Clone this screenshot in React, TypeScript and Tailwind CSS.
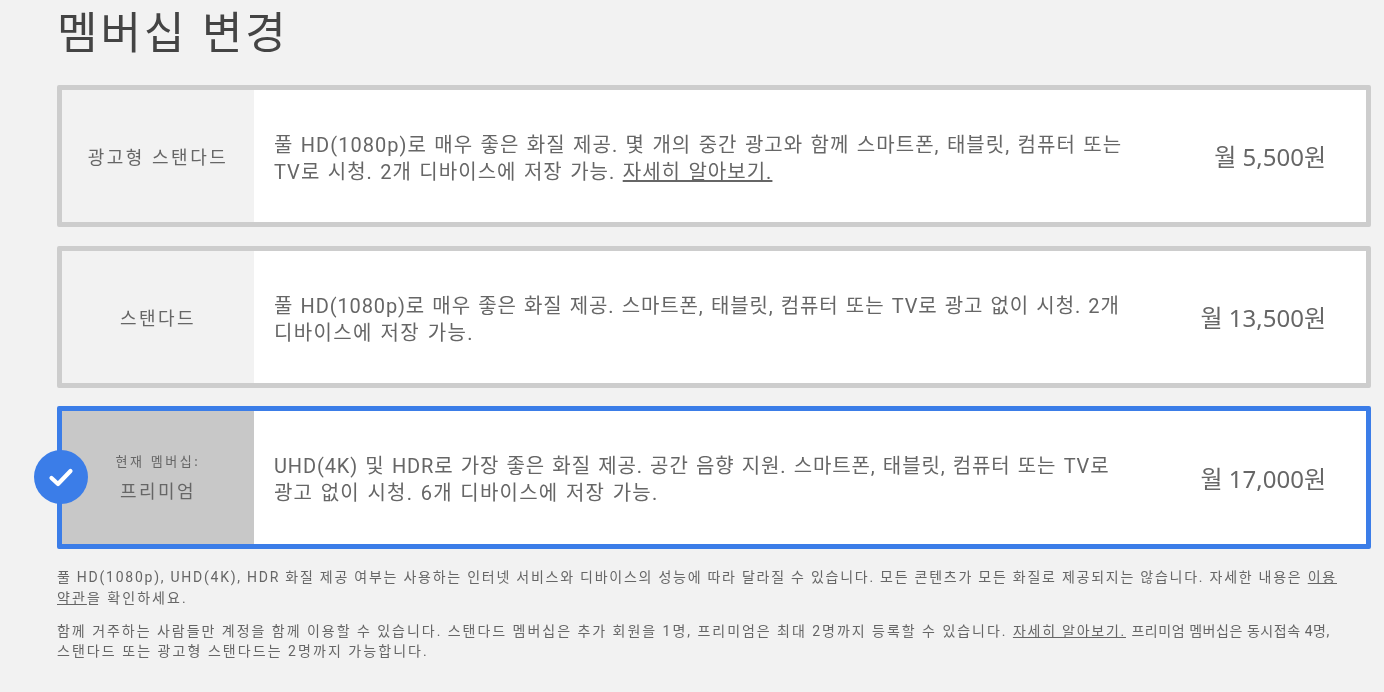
import React from "react";

function Check() {
  return (
    <svg viewBox="0 0 54 54" className="absolute left-[-28px] top-[39px] h-[54px] w-[54px]">
      <circle cx="27" cy="27" r="27" fill="#3b7de8" />
      <path d="M17.5 28l6.5 6 12.5-13" fill="none" stroke="#fff" strokeWidth="4.2" strokeLinecap="round" strokeLinejoin="round" />
    </svg>
  );
}

type Line = { text: React.ReactNode; cls: string };

function Plan({ name, label, lines, price, current }: { name: string; label?: string; lines: Line[]; price: string; current?: boolean }) {
  return (
    <div className={`relative flex rounded-[2px] border-[5px] bg-white ${current ? "-mt-px h-[143px] border-[#3b7de8]" : "h-[142px] border-[#cdcdcd]"}`}>
      <div className={`flex w-[192px] shrink-0 flex-col items-center justify-center pt-[1px] text-[#666] ${current ? "bg-[#c8c8c8]" : "bg-[#f2f2f2]"}`}>
        {label && <div className="mb-[10px] text-[13px] leading-[16px] tracking-[2.6px]">{label}</div>}
        <div className="text-[18px] leading-[24px] tracking-[2.5px]">{name}</div>
      </div>
      <div className="flex flex-1 flex-col justify-center pl-[20px] pt-[5px] font-['Roboto','Noto_Sans_CJK_KR',sans-serif] text-[20px] leading-[27px] [word-spacing:1.4px] text-[#666]">
        {lines.map((l, i) => (
          <div key={i} className={`whitespace-nowrap ${l.cls}`}>{l.text}</div>
        ))}
      </div>
      <div className="absolute right-[40px] top-[50%] mt-[1px] -translate-y-1/2 text-[24px] leading-[32px] text-[#666]">{price}</div>
      {current && <Check />}
    </div>
  );
}

export default function App() {
  return (
    <div
      className="h-[692px] w-[1384px] overflow-hidden bg-[#f2f2f2] pl-[57px] pr-[13px] blur-[0.6px]"
      style={{ fontFamily: '"Noto Sans", "Noto Sans CJK KR", sans-serif' }}
    >
      <h1 className="pt-[3px] text-[44px] font-normal leading-[58px] tracking-[3px] text-[#444]">멤버십 변경</h1>
      <div className="mt-[24px] flex flex-col gap-[19px]">
        <Plan
          name="광고형 스탠다드"
          lines={[
            { text: "풀 HD(1080p)로 매우 좋은 화질 제공. 몇 개의 중간 광고와 함께 스마트폰, 태블릿, 컴퓨터 또는", cls: "tracking-[1.03px]" },
            { text: <>TV로 시청. 2개 디바이스에 저장 가능. <span className="underline">자세히 알아보기.</span></>, cls: "tracking-[1.03px]" },
          ]}
          price="월 5,500원"
        />
        <Plan
          name="스탠다드"
          lines={[
            { text: "풀 HD(1080p)로 매우 좋은 화질 제공. 스마트폰, 태블릿, 컴퓨터 또는 TV로 광고 없이 시청. 2개", cls: "tracking-[0.88px]" },
            { text: "디바이스에 저장 가능.", cls: "tracking-[1.36px]" },
          ]}
          price="월 13,500원"
        />
        <Plan
          name="프리미엄"
          label="현재 멤버십:"
          current
          lines={[
            { text: "UHD(4K) 및 HDR로 가장 좋은 화질 제공. 공간 음향 지원. 스마트폰, 태블릿, 컴퓨터 또는 TV로", cls: "tracking-[0.88px]" },
            { text: "광고 없이 시청. 6개 디바이스에 저장 가능.", cls: "tracking-[1.2px]" },
          ]}
          price="월 17,000원"
        />
      </div>
      <div className="mt-[18px] font-['Roboto','Noto_Sans_CJK_KR',sans-serif] text-[14px] leading-[20.5px] tracking-[2.05px] text-[#666]">
        <p className="whitespace-nowrap tracking-[1.75px]">풀 HD(1080p), UHD(4K), HDR 화질 제공 여부는 사용하는 인터넷 서비스와 디바이스의 성능에 따라 달라질 수 있습니다. 모든 콘텐츠가 모든 화질로 제공되지는 않습니다. 자세한 내용은 <span className="underline">이용</span></p>
        <p><span className="underline">약관</span>을 확인하세요.</p>
        <p className="mt-[12.5px] whitespace-nowrap tracking-[1.97px]">함께 거주하는 사람들만 계정을 함께 이용할 수 있습니다. 스탠다드 멤버십은 추가 회원을 1명, 프리미엄은 최대 2명까지 등록할 수 있습니다. <span className="underline tracking-[1.75px]">자세히 알아보기.</span> <span className="tracking-[0.55px]">프리미엄 멤버십은 동시접속 4명,</span></p>
        <p>스탠다드 또는 광고형 스탠다드는 2명까지 가능합니다.</p>
      </div>
    </div>
  );
}
